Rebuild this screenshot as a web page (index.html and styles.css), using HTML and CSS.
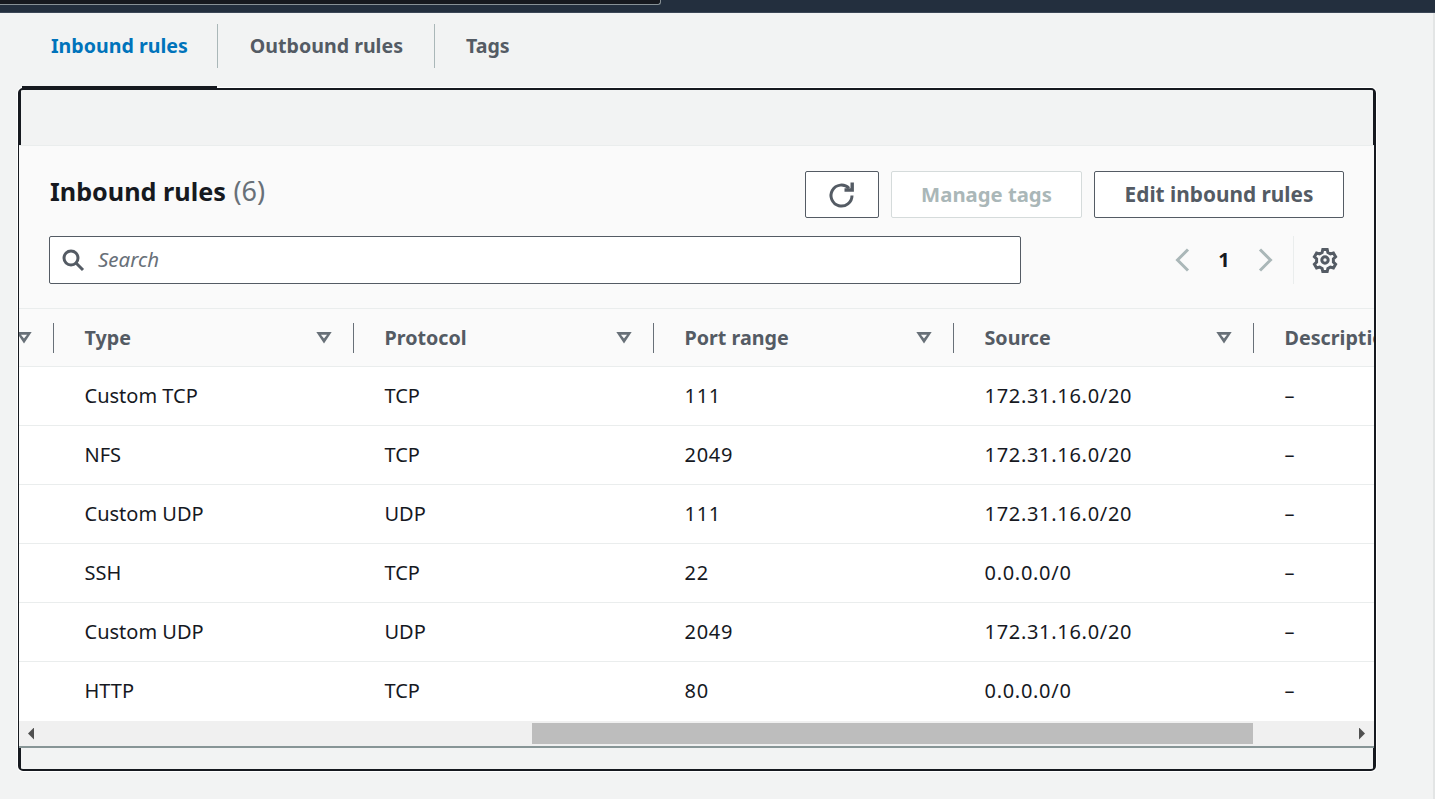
FILE: index.html
```html
<!DOCTYPE html>
<html lang="en">
<head>
<meta charset="utf-8">
<title>Inbound rules</title>
<link rel="stylesheet" href="styles.css">
</head>
<body>
<div class="topbar"><div class="topbox"></div></div>
<div class="page">
  <nav class="tabs">
    <a class="tab active">Inbound rules</a>
    <a class="tab">Outbound rules</a>
    <a class="tab">Tags</a>
  </nav>
  <section class="card">
    <div class="card-gap"></div>
    <div class="panel">
      <header class="panel-head">
        <div class="head-row">
          <h2 class="title">Inbound rules <span class="count">(6)</span></h2>
          <div class="actions">
            <button class="btn btn-icon" aria-label="Refresh">
              <svg width="28" height="28" viewBox="1 0 28 28" fill="none" stroke="#545b64" stroke-width="3"><path d="M22 7.2A10.5 10.5 0 1 0 25 14.5"/><path d="M25.2 1.5V9H17.5" stroke-width="3.4"/></svg>
            </button>
            <button class="btn btn-disabled">Manage tags</button>
            <button class="btn btn-wide">Edit inbound rules</button>
          </div>
        </div>
        <div class="tools-row">
          <div class="search">
            <svg width="24" height="24" viewBox="0 0 24 24" fill="none" stroke="#545b64" stroke-width="3"><circle cx="10" cy="10" r="7"/><path d="M15 15l7 7"/></svg>
            <span class="placeholder">Search</span>
          </div>
          <div class="pager">
            <svg width="18" height="26" viewBox="0 0 18 26" fill="none" stroke="#aab7b8" stroke-width="3"><path d="M15 2.5L4.5 13 15 23.5"/></svg>
            <span class="page-num">1</span>
            <svg width="18" height="26" viewBox="0 0 18 26" fill="none" stroke="#aab7b8" stroke-width="3"><path d="M3 2.5L13.5 13 3 23.5"/></svg>
          </div>
          <div class="prefs">
            <svg width="26" height="26" viewBox="0 0 26 26" fill="none" stroke="#545b64" stroke-width="3"><path d="M10.8 2.5h4.4l.7 3 2.5 1.4 3-.9 2.2 3.8-2.2 2.1v3.2l2.2 2.1-2.2 3.8-3-.9-2.5 1.4-.7 3h-4.4l-.7-3-2.5-1.4-3 .9-2.2-3.8 2.2-2.1v-3.2L2.4 9.8l2.2-3.8 3 .9 2.5-1.4z"/><circle cx="13" cy="13" r="3.2"/></svg>
          </div>
        </div>
      </header>
      <div class="table">
        <div class="row row-head">
          <div class="cell cell-stub"><i class="sort"></i></div>
          <div class="cell"><span>Type</span><i class="sort"></i></div>
          <div class="cell"><span>Protocol</span><i class="sort"></i></div>
          <div class="cell"><span>Port range</span><i class="sort"></i></div>
          <div class="cell"><span>Source</span><i class="sort"></i></div>
          <div class="cell cell-last"><span>Description</span></div>
        </div>
        <div class="row"><div class="cell cell-stub"></div><div class="cell">Custom TCP</div><div class="cell">TCP</div><div class="cell num">111</div><div class="cell num">172.31.16.0/20</div><div class="cell cell-last">–</div></div>
        <div class="row"><div class="cell cell-stub"></div><div class="cell">NFS</div><div class="cell">TCP</div><div class="cell num">2049</div><div class="cell num">172.31.16.0/20</div><div class="cell cell-last">–</div></div>
        <div class="row"><div class="cell cell-stub"></div><div class="cell">Custom UDP</div><div class="cell">UDP</div><div class="cell num">111</div><div class="cell num">172.31.16.0/20</div><div class="cell cell-last">–</div></div>
        <div class="row"><div class="cell cell-stub"></div><div class="cell">SSH</div><div class="cell">TCP</div><div class="cell num">22</div><div class="cell num">0.0.0.0/0</div><div class="cell cell-last">–</div></div>
        <div class="row"><div class="cell cell-stub"></div><div class="cell">Custom UDP</div><div class="cell">UDP</div><div class="cell num">2049</div><div class="cell num">172.31.16.0/20</div><div class="cell cell-last">–</div></div>
        <div class="row"><div class="cell cell-stub"></div><div class="cell">HTTP</div><div class="cell">TCP</div><div class="cell num">80</div><div class="cell num">0.0.0.0/0</div><div class="cell cell-last">–</div></div>
      </div>
      <div class="scrollbar">
        <i class="arrow arrow-left"></i>
        <div class="track"><div class="thumb"></div></div>
        <i class="arrow arrow-right"></i>
      </div>
    </div>
    <div class="card-foot"></div>
  </section>
</div>
</body>
</html>
```
FILE: styles.css
```css
* { box-sizing: border-box; }
html, body { margin: 0; height: 100%; }
body {
  background: #f2f3f3;
  font-family: "Noto Sans", "Open Sans", sans-serif;
  color: #16191f;
  overflow: hidden;
  height: 799px;
}
.topbar { height: 13px; background: #232f3e; border-bottom: 1px solid #3b4656; }
.topbox {
  width: 661px; height: 5px;
  background: #16191f;
  border: 1px solid #879196;
  border-width: 0 1px 1px 0;
  border-radius: 0 0 3px 0;
}
.page { padding: 11px 0 0 18px; height: 786px; border-right: 2px solid #e3e5e5; }
.tabs { display: flex; height: 64px; padding-left: 4px; }
.tab {
  height: 44px;
  font-size: 19.6px; font-weight: 700; line-height: 44px;
  color: #545b64;
  padding: 0 31px 0 32px;
  border-right: 1px solid #aab7b8;
  box-sizing: content-box;
  white-space: nowrap;
}
.tab:last-child { border-right: 0; padding-left: 31px; }
.tab.active { color: #0073bb; position: relative; padding: 0 29px; }
.tab.active::after {
  content: ""; position: absolute; left: 0; right: 0; top: 62px; height: 3px; background: #16191f;
}
.card {
  width: 1358px; height: 683px;
  border: 2px solid #16191f;
  border-radius: 5px;
  box-shadow: 0 0 0 1px #fff;
  display: flex; flex-direction: column;
  background: #f2f3f3;
}
.card-gap { height: 55px; flex: none; border: solid #16191f; border-width: 0 1px; }
.panel { background: #fafafa; border-top: 1px solid #eaeded; flex: none; margin-left: -1px; }
.panel-head { padding: 25px 30px 24px 30px; height: 163px; border-bottom: 1px solid #eaeded; display: flex; flex-direction: column; gap: 18px; }
.head-row { display: flex; justify-content: space-between; align-items: center; height: 47px; }
.title { margin: 0 0 8px 1px; font-size: 25.2px; font-weight: 700; line-height: 42px; }
.count { font-weight: 400; color: #687078; font-size: 27px; margin-left: 1px; }
.actions { display: flex; gap: 12px; }
.btn {
  height: 47px; padding: 0;
  font: 700 20.8px/1 "Noto Sans", sans-serif;
  color: #545b64;
  background: #fff;
  border: 1px solid #545b64;
  border-radius: 2px;
  display: flex; align-items: center; justify-content: center;
}
.btn-icon { width: 74px; }
.btn-disabled { width: 191px; color: #aab7b8; border-color: #d5dbdb; font-size: 20.3px; }
.btn-wide { width: 250px; }
.tools-row { display: flex; align-items: center; height: 48px; }
.search {
  width: 973px; height: 48px;
  display: flex; align-items: center; gap: 13px; padding-left: 11px;
  background: #fff;
  border: 1px solid #545b64;
  border-radius: 2px;
}
.placeholder { font-size: 20.5px; font-style: italic; color: #687078; padding-bottom: 2px; }
.pager { display: flex; align-items: center; margin-left: 152px; width: 102px; margin-right: 18px; justify-content: space-between; }
.page-num { font-size: 20px; font-weight: 700; color: #16191f; padding-bottom: 2px; }
.prefs { height: 48px; width: 51px; border-left: 1px solid #eaeded; display: flex; align-items: center; justify-content: flex-end; padding-right: 6px; }
.table { background: #fff; overflow: hidden; }
.row {
  display: grid;
  grid-template-columns: 35px 300px 300px 300px 300px 1fr;
  height: 59px;
  border-bottom: 1px solid #eaeded;
  align-items: center;
  font-size: 20px;
}
.row:last-child { border-bottom: 0; }
.row-head { height: 58px; background: #fafafa; font-weight: 700; color: #545b64; font-size: 19.7px; }
.cell { padding-left: 30.5px; padding-bottom: 2px; display: flex; align-items: center; justify-content: space-between; white-space: nowrap; overflow: hidden; }
.num { letter-spacing: 0.7px; }
.cell-stub { padding: 0; justify-content: flex-end; }
.row-head .cell { height: 30px; padding-bottom: 0; border-right: 1px solid #687078; padding-right: 21px; }
.row-head .cell-stub { padding-right: 21px; }
.row-head .cell-last { border-right: 0; padding-right: 0; justify-content: flex-start; }
.sort {
  display: block; flex: none; width: 16px; height: 12px;
  background: #687078;
  clip-path: polygon(evenodd, 0 0, 100% 0, 50% 100%, 0 0, 31% 27%, 69% 27%, 50% 58%, 31% 27%);
}
.scrollbar { height: 27px; background: #f0f0f0; border-bottom: 2px solid #879596; display: flex; align-items: center; padding: 0 9px; }
.track { flex: 1; height: 21px; display: flex; padding-left: 498px; }
.thumb { width: 721px; background: #bdbdbd; }
.arrow { flex: none; width: 6px; height: 12px; display: block; background: #505050; }
.arrow-left { clip-path: polygon(100% 0, 100% 100%, 0 50%); }
.arrow-right { clip-path: polygon(0 0, 0 100%, 100% 50%); }
.card-foot { flex: 1; border: solid #16191f; border-width: 0 1px; }
```
